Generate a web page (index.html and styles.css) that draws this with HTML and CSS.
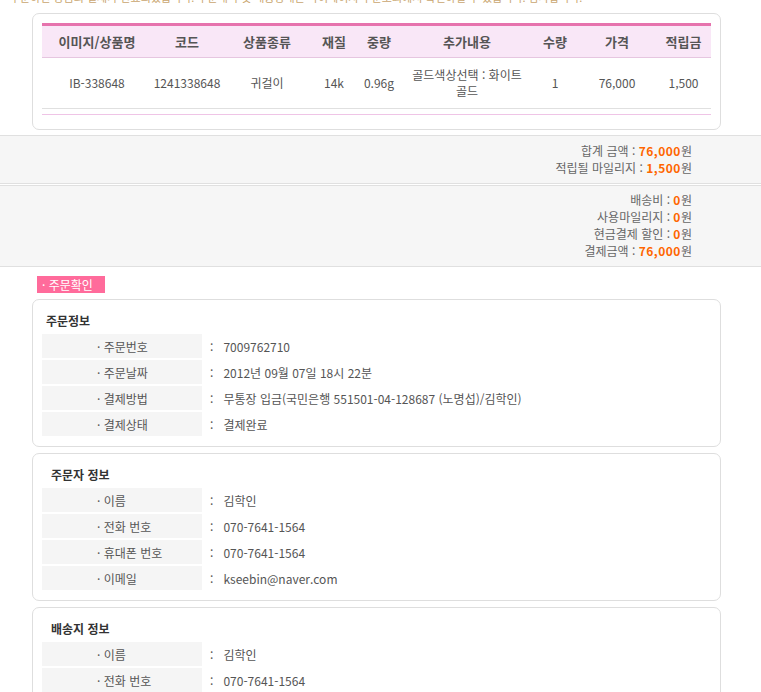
FILE: index.html
```html
<!DOCTYPE html>
<html lang="ko">
<head>
    <meta charset="UTF-8">
    <meta name="viewport" content="width=device-width, initial-scale=1.0">
    <title>주문확인</title>
    <link rel="stylesheet" href="styles.css">
</head>
<body>
    <div class="topline">
        <p>주문하신 상품의 결제가 완료되었습니다. 주문내역 및 배송상태는 마이페이지 주문조회에서 확인하실 수 있습니다. 감사합니다.</p>
    </div>

    <div class="cart-box">
        <table class="cart">
            <colgroup>
                <col style="width:110px"><col style="width:70px"><col style="width:90px">
                <col style="width:44px"><col style="width:46px"><col style="width:130px">
                <col style="width:46px"><col style="width:78px"><col style="width:55px">
            </colgroup>
            <thead>
                <tr>
                    <th>이미지/상품명</th>
                    <th>코드</th>
                    <th>상품종류</th>
                    <th>재질</th>
                    <th>중량</th>
                    <th>추가내용</th>
                    <th>수량</th>
                    <th>가격</th>
                    <th>적립금</th>
                </tr>
            </thead>
            <tbody>
                <tr>
                    <td>IB-338648</td>
                    <td>1241338648</td>
                    <td>귀걸이</td>
                    <td>14k</td>
                    <td>0.96g</td>
                    <td class="option">골드색상선택 : 화이트 골드</td>
                    <td>1</td>
                    <td>76,000</td>
                    <td>1,500</td>
                </tr>
            </tbody>
        </table>
        <div class="cart-foot"></div>
    </div>

    <div class="sum-band">
        <p>합계 금액 : <b>76,000</b>원</p>
        <p>적립될 마일리지 : <b>1,500</b>원</p>
    </div>
    <div class="sum-band sum-band-total">
        <p>배송비 : <b>0</b>원</p>
        <p>사용마일리지 : <b>0</b>원</p>
        <p>현금결제 할인 : <b>0</b>원</p>
        <p>결제금액 : <b>76,000</b>원</p>
    </div>

    <div class="section">
        <span class="tag">· 주문확인</span>

        <div class="info-box">
            <h3 class="info-title first">주문정보</h3>
            <div class="info-row"><span class="label">· 주문번호</span><span class="value">:&nbsp;&nbsp;&nbsp;7009762710</span></div>
            <div class="info-row"><span class="label">· 주문날짜</span><span class="value">:&nbsp;&nbsp;&nbsp;2012년 09월 07일 18시 22분</span></div>
            <div class="info-row"><span class="label">· 결제방법</span><span class="value">:&nbsp;&nbsp;&nbsp;무통장 입금(국민은행 551501-04-128687 (노명섭)/김학인)</span></div>
            <div class="info-row"><span class="label">· 결제상태</span><span class="value">:&nbsp;&nbsp;&nbsp;결제완료</span></div>
        </div>

        <div class="info-box">
            <h3 class="info-title">주문자 정보</h3>
            <div class="info-row"><span class="label">· 이름</span><span class="value">:&nbsp;&nbsp;&nbsp;김학인</span></div>
            <div class="info-row"><span class="label">· 전화 번호</span><span class="value">:&nbsp;&nbsp;&nbsp;070-7641-1564</span></div>
            <div class="info-row"><span class="label">· 휴대폰 번호</span><span class="value">:&nbsp;&nbsp;&nbsp;070-7641-1564</span></div>
            <div class="info-row"><span class="label">· 이메일</span><span class="value">:&nbsp;&nbsp;&nbsp;kseebin@naver.com</span></div>
        </div>

        <div class="info-box">
            <h3 class="info-title">배송지 정보</h3>
            <div class="info-row"><span class="label">· 이름</span><span class="value">:&nbsp;&nbsp;&nbsp;김학인</span></div>
            <div class="info-row"><span class="label">· 전화 번호</span><span class="value">:&nbsp;&nbsp;&nbsp;070-7641-1564</span></div>
            <div class="info-row"><span class="label">· 휴대폰 번호</span><span class="value">:&nbsp;&nbsp;&nbsp;070-7641-1564</span></div>
            <div class="info-row"><span class="label">· 주소</span><span class="value">:&nbsp;&nbsp;&nbsp;서울</span></div>
        </div>
    </div>
</body>
</html>
```

FILE: styles.css
```css
body {
    margin: 0;
    font-family: "Noto Sans CJK KR", "Noto Sans", sans-serif;
    font-size: 12px;
    color: #555;
    background-color: #fff;
}

p {
    margin: 0;
}

/* clipped notice line at the very top */
.topline {
    height: 4px;
    overflow: hidden;
    padding-left: 10px;
}

.topline p {
    margin-top: -9px;
    font-size: 11px;
    line-height: 12px;
    color: #c9a66f;
    white-space: nowrap;
}

.cart-box {
    margin: 9px 40px 0 32px;
    padding: 9px 9px 14px;
    border: 1px solid #dedede;
    border-radius: 7px;
}

.cart {
    width: 669px;
    border-collapse: collapse;
    table-layout: fixed;
    border-top: 3px solid #e673ad;
}

.cart th {
    height: 31px;
    padding: 0;
    background-color: #f9e7f7;
    border-bottom: 1px solid #e6c6e0;
    font-size: 13px;
    font-weight: bold;
    color: #555;
    text-align: center;
}

.cart td {
    height: 50px;
    padding: 0;
    border-bottom: 1px solid #e0e0e0;
    text-align: center;
    line-height: 16px;
    color: #555;
}

.cart td.option {
    word-break: keep-all;
    padding: 0 6px;
}

.cart-foot {
    margin-top: 5px;
    border-top: 1px solid #efc4e6;
}

.sum-band {
    margin-top: 5px;
    padding: 6px 69px 7px 0;
    background-color: #f6f6f6;
    border-top: 1px solid #e0e0e0;
    border-bottom: 1px solid #e0e0e0;
    text-align: right;
    line-height: 17px;
    color: #666;
}

.sum-band b {
    color: #ff6600;
    letter-spacing: 0.5px;
}

.sum-band-total {
    margin-top: 1px;
    padding: 5px 69px 7px 0;
}

.section {
    padding: 9px 40px 0 32px;
}

.tag {
    display: inline-block;
    margin-left: 5px;
    width: 68px;
    box-sizing: border-box;
    padding-left: 5px;
    height: 17px;
    line-height: 17px;
    background-color: #ff6b9b;
    color: #fff;
}

.info-box {
    margin-top: 6px;
    padding: 12px 9px 10px;
    border: 1px solid #dedede;
    border-radius: 7px;
}

.info-title {
    margin: 0 0 5px 9px;
    font-size: 12px;
    line-height: 17px;
    color: #333;
}

.info-title.first {
    margin-left: 4px;
}

.info-row {
    display: flex;
    align-items: center;
    height: 24px;
    margin-top: 2px;
}

.info-row:first-of-type {
    margin-top: 0;
}

.label {
    width: 160px;
    height: 100%;
    box-sizing: border-box;
    padding-left: 55px;
    display: flex;
    align-items: center;
    background-color: #f5f5f5;
    color: #555;
}

.value {
    padding-left: 8px;
    color: #555;
}
```
